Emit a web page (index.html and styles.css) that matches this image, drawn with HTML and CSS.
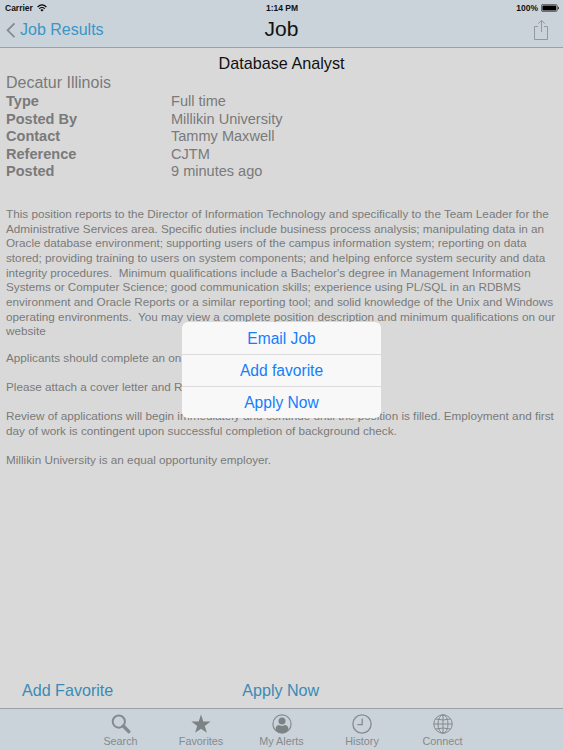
FILE: index.html
```html
<!DOCTYPE html>
<html lang="en">
<head>
    <meta charset="UTF-8">
    <meta name="viewport" content="width=device-width, initial-scale=1.0">
    <title>Job</title>
    <link rel="stylesheet" href="styles.css">
</head>
<body>
    <div class="app">
        <header class="top">
            <div class="status-bar">
                <div class="carrier">
                    <span>Carrier</span>
                    <svg class="wifi" viewBox="0 0 10 8" width="10" height="8">
                        <path d="M0.6 3 Q5 -1.2 9.4 3M2.2 4.7 Q5 2.2 7.8 4.7" fill="none" stroke="#000" stroke-width="1.1"/>
                        <path d="M3.4 5.9 Q5 4.8 6.6 5.9 L5 7.6 Z" fill="#000"/>
                    </svg>
                </div>
                <div class="clock">1:14 PM</div>
                <div class="power">
                    <span>100%</span>
                    <svg viewBox="0 0 18 8" width="18" height="8">
                        <rect x="0.4" y="0.4" width="15.8" height="7.2" rx="1.6" fill="none" stroke="#333" stroke-width="0.7"/>
                        <rect x="1.4" y="1.4" width="13.8" height="5.2" rx="0.7" fill="#000"/>
                        <path d="M16.8 2.5 Q18 3 18 4 Q18 5 16.8 5.5 Z" fill="#222"/>
                    </svg>
                </div>
            </div>
            <nav class="nav-bar">
                <a class="back">
                    <svg viewBox="0 0 10 16" width="10" height="16">
                        <path d="M8.5 1.4 L1.6 8.3 L8.5 15.2" fill="none" stroke="#858a8d" stroke-width="1.8"/>
                    </svg>
                    <span>Job Results</span>
                </a>
                <h1>Job</h1>
                <a class="share">
                    <svg viewBox="0 0 16 22" width="16" height="22">
                        <path d="M5 7.5 H1.5 V20.5 H14.5 V7.5 H11M8.5 13 V1.5M5.2 4.7 L8.5 1.3 L11.8 4.7" fill="none" stroke="#92989c" stroke-width="1"/>
                    </svg>
                </a>
            </nav>
        </header>

        <main class="job">
            <h2>Database Analyst</h2>
            <div class="location">Decatur Illinois</div>
            <dl class="details">
                <dt>Type</dt><dd>Full time</dd>
                <dt>Posted By</dt><dd>Millikin University</dd>
                <dt>Contact</dt><dd>Tammy Maxwell</dd>
                <dt>Reference</dt><dd>CJTM</dd>
                <dt>Posted</dt><dd>9 minutes ago</dd>
            </dl>
            <div class="description">
                <p class="intro">This position reports to the Director of Information Technology and specifically to the Team Leader for the<br>
                Administrative Services area. Specific duties include business process analysis; manipulating data in an<br>
                Oracle database environment; supporting users of the campus information system; reporting on data<br>
                stored; providing training to users on system components; and helping enforce system security and data<br>
                integrity procedures.&nbsp; Minimum qualifications include a Bachelor's degree in Management Information<br>
                Systems or Computer Science; good communication skills; experience using PL/SQL in an RDBMS<br>
                environment and Oracle Reports or a similar reporting tool; and solid knowledge of the Unix and Windows<br>
                operating environments.&nbsp; You may view a complete position description and minimum qualifications on our<br>
                website</p>
                <p>Applicants should complete an on</p>
                <p>Please attach a cover letter and R</p>
                <p>Review of applications will begin immediately and continue until the position is filled. Employment and first<br>
                day of work is contingent upon successful completion of background check.</p>
                <p>Millikin University is an equal opportunity employer.</p>
            </div>
            <div class="job-actions">
                <a>Add Favorite</a>
                <a>Apply Now</a>
            </div>
        </main>

        <footer class="tab-bar">
            <a class="tab">
                <svg viewBox="0 0 20 20" width="20" height="20">
                    <circle cx="7.8" cy="7.6" r="6.1" fill="none" stroke="#858a8d" stroke-width="2"/>
                    <path d="M12.3 12 L17.8 17.6" stroke="#858a8d" stroke-width="3.4" stroke-linecap="round"/>
                </svg>
                <span>Search</span>
            </a>
            <a class="tab">
                <svg viewBox="0 0 20 20" width="20" height="20">
                    <path d="M10 0.6 L12.3 7.4 L19.6 7.5 L13.8 11.9 L15.9 18.8 L10 14.7 L4.1 18.8 L6.2 11.9 L0.4 7.5 L7.7 7.4 Z" fill="#7d8285"/>
                </svg>
                <span>Favorites</span>
            </a>
            <a class="tab">
                <svg viewBox="0 0 20 20" width="20" height="20">
                    <circle cx="10" cy="10" r="9.1" fill="none" stroke="#858a8d" stroke-width="1.2"/>
                    <circle cx="10" cy="7" r="3.5" fill="#7d8285"/>
                    <path d="M3.7 16.4 V14 Q3.9 11.6 6.6 11.1 Q10 12.7 13.4 11.1 Q16.1 11.6 16.3 14 V16.4 Q10 21.5 3.7 16.4 Z" fill="#7d8285"/>
                </svg>
                <span>My Alerts</span>
            </a>
            <a class="tab">
                <svg viewBox="0 0 20 20" width="20" height="20">
                    <circle cx="10" cy="10" r="9.1" fill="none" stroke="#858a8d" stroke-width="1.3"/>
                    <path d="M10.2 4.4 V10.6 H5.4" fill="none" stroke="#858a8d" stroke-width="1.3"/>
                </svg>
                <span>History</span>
            </a>
            <a class="tab">
                <svg viewBox="0 0 20 20" width="20" height="20">
                    <g fill="none" stroke="#858a8d" stroke-width="1">
                        <circle cx="10" cy="10" r="9.2"/>
                        <ellipse cx="10" cy="10" rx="5" ry="9.2"/>
                        <path d="M10 0.8 V19.2M0.8 10 H19.2M2.6 5 Q10 7 17.4 5M2.6 15 Q10 13 17.4 15"/>
                    </g>
                </svg>
                <span>Connect</span>
            </a>
        </footer>

        <div class="menu">
            <a>Email Job</a>
            <a>Add favorite</a>
            <a>Apply Now</a>
        </div>
    </div>
</body>
</html>
```
FILE: styles.css
```css
body {
    margin: 0;
    font-family: "Liberation Sans", Arial, sans-serif;
    color: #7a7a7a;
    background-color: #d9d9d9;
}

.app {
    position: relative;
    display: flex;
    flex-direction: column;
    width: 563px;
    height: 750px;
    overflow: hidden;
    white-space: nowrap;
}

.top {
    box-sizing: border-box;
    height: 48px;
    background-color: #cad3d9;
    border-bottom: 1px solid #9c9fa5;
}

.status-bar {
    display: grid;
    grid-template-columns: 1fr auto 1fr;
    height: 16px;
    padding: 0 4px 0 5px;
    font-size: 8.5px;
    font-weight: bold;
    line-height: 16px;
    color: #111;
}

.carrier,
.power {
    display: flex;
    align-items: center;
    gap: 4px;
}

.power {
    justify-content: flex-end;
    gap: 3px;
}

.nav-bar {
    display: grid;
    grid-template-columns: 1fr auto 1fr;
    align-items: center;
    height: 28px;
    padding: 0 14px 0 6px;
}

.back {
    display: flex;
    align-items: center;
    gap: 4px;
    font-size: 16px;
    color: #3a96c6;
}

h1 {
    margin: -3px 0 0 8px;
    font-size: 21px;
    font-weight: normal;
    color: #111;
}

.share {
    display: flex;
    justify-content: flex-end;
}

.job {
    flex: 1;
    display: flex;
    flex-direction: column;
}

h2 {
    margin: 5px 0 0;
    font-size: 16.2px;
    font-weight: normal;
    line-height: 20px;
    text-align: center;
    color: #111;
}

.location {
    padding-left: 6px;
    font-size: 16px;
    line-height: 20px;
}

.details {
    display: grid;
    grid-template-columns: 165px 1fr;
    margin: 0;
    padding-left: 6px;
    font-size: 14.55px;
    line-height: 17.6px;
}

dt {
    font-weight: bold;
}

dd {
    margin: 0;
}

.description {
    margin-top: 26px;
    padding-left: 6px;
    font-size: 11.73px;
    line-height: 14.65px;
}

.description p {
    margin: 0 0 14.65px;
}

.description .intro {
    margin-bottom: 12px;
}

.job-actions {
    display: flex;
    gap: 129px;
    margin-top: auto;
    padding: 0 0 8px 22px;
    font-size: 16.1px;
    line-height: 20px;
    color: #3a8bb5;
}

.tab-bar {
    box-sizing: border-box;
    display: flex;
    justify-content: center;
    height: 42px;
    padding-top: 5px;
    background-color: #cad3d9;
    border-top: 1px solid #98a2a9;
}

.tab {
    display: flex;
    flex-direction: column;
    align-items: center;
    width: 80.5px;
    font-size: 10.8px;
    line-height: 14px;
    color: #858a8d;
}

/* action sheet over the job text */
.menu {
    position: absolute;
    top: 322px;
    left: 182px;
    width: 199px;
    height: 96px;
    border-radius: 6px;
    background-color: #f8f8f8;
    overflow: hidden;
}

.menu a {
    display: block;
    box-sizing: border-box;
    height: 32px;
    font-size: 15.6px;
    line-height: 32px;
    text-align: center;
    color: #147efb;
    border-bottom: 1px solid #dcdcde;
}

.menu a:first-child {
    height: 33px;
    padding-top: 1px;
}

.menu a:last-child {
    border-bottom: none;
}
```
